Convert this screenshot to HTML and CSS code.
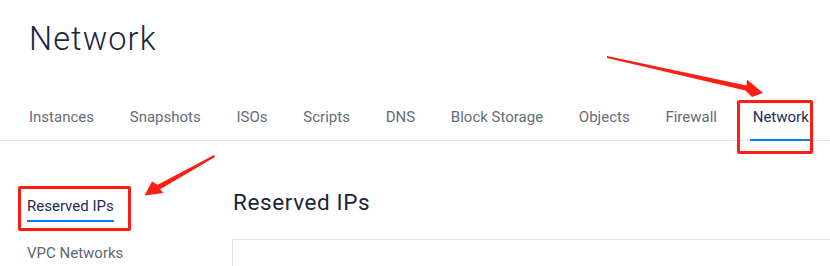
FILE: index.html
```html
<!DOCTYPE html>
<html lang="en">
<head>
<meta charset="utf-8">
<title>Network</title>
<link rel="stylesheet" href="styles.css">
</head>
<body>
<div class="page">
  <header class="header">
    <h1 class="title">Network</h1>
    <nav class="tabs">
      <a class="tab">Instances</a>
      <a class="tab">Snapshots</a>
      <a class="tab">ISOs</a>
      <a class="tab">Scripts</a>
      <a class="tab">DNS</a>
      <a class="tab">Block Storage</a>
      <a class="tab">Objects</a>
      <a class="tab">Firewall</a>
      <a class="tab active">Network</a>
    </nav>
  </header>
  <div class="content">
    <aside class="sidebar">
      <a class="side-item active">Reserved IPs</a>
      <a class="side-item">VPC Networks</a>
    </aside>
    <main class="main">
      <h2 class="heading">Reserved IPs</h2>
      <div class="card"></div>
    </main>
  </div>

  <div class="mark mark-tab"></div>
  <div class="mark mark-side"></div>
  <svg class="arrows" width="830" height="266" viewBox="0 0 830 266">
    <polygon fill="#ff1e14" points="607,56 746.5,85.5 747,79.5 763,93 752,97 745.5,90.5 607,58"/>
    <polygon fill="#ff1e14" points="214,155 157.7,184.8 152,181.5 144.5,195.5 163.5,193 160.1,189.2 215,157"/>
  </svg>
</div>
</body>
</html>
```

FILE: styles.css
```css
* { box-sizing: border-box; }
html, body {
  margin: 0;
  padding: 0;
  background: #ffffff;
  font-family: Roboto, "Liberation Sans", Arial, sans-serif;
}
.page {
  position: relative;
  width: 830px;
  height: 266px;
  overflow: hidden;
}
.header {
  padding-top: 19px;
}
.title {
  margin: 0 0 48px 29px;
  font-size: 32.5px;
  line-height: 40px;
  font-weight: 300;
  letter-spacing: 1.1px;
  color: #1b2540;
}
.tabs {
  display: flex;
  gap: 29.75px;
  padding-left: 26px;
  border-bottom: 1px solid #e3e5ea;
}
.tab {
  display: block;
  padding: 0 3px 12px;
  margin-bottom: -1px;
  font-size: 15px;
  line-height: 20px;
  color: #646c7a;
  border-bottom: 2px solid transparent;
  white-space: nowrap;
}
.tab.active {
  color: #1e2b58;
  border-bottom-color: #0a7cff;
}
.content {
  display: grid;
  grid-template-columns: 232px 1fr;
}
.sidebar {
  display: flex;
  flex-direction: column;
  align-items: flex-start;
  padding: 55px 0 0 27px;
  gap: 21px;
}
.side-item {
  display: block;
  font-size: 15px;
  line-height: 20px;
  color: #5f6673;
  padding-bottom: 4px;
  border-bottom: 2px solid transparent;
}
.side-item.active {
  color: #1e2b58;
  border-bottom-color: #0a7cff;
}
.side-item + .side-item {
  padding-bottom: 0;
  border-bottom: 0;
}
.main {
  padding-top: 47px;
}
.heading {
  margin: 0 0 23px 1px;
  font-size: 22.5px;
  line-height: 28px;
  font-weight: 400;
  letter-spacing: 0.6px;
  color: #1b2540;
}
.card {
  height: 60px;
  margin-right: -10px;
  border: 1px solid #e2e3e6;
}
.mark {
  position: absolute;
  border: 3px solid #ff1e14;
  border-radius: 2px;
}
.mark-tab {
  left: 737px;
  top: 100px;
  width: 76px;
  height: 54px;
}
.mark-side {
  left: 18px;
  top: 186px;
  width: 113px;
  height: 45px;
}
.arrows {
  position: absolute;
  left: 0;
  top: 0;
}
```
